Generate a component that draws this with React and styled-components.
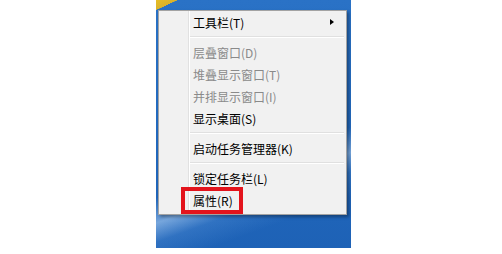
import React from 'react';
import styled, { createGlobalStyle } from 'styled-components';

const GlobalStyle = createGlobalStyle`
  html, body {
    margin: 0;
    padding: 0;
    background: #ffffff;
  }
  body {
    font-family: "Noto Sans CJK SC", "Liberation Sans", sans-serif;
  }
`;

const Page = styled.div`
  width: 502px;
  height: 254px;
  padding-left: 156px;
  box-sizing: border-box;
`;

const Desktop = styled.div`
  position: relative;
  width: 195px;
  height: 248px;
  padding: 10px 0 0 2px;
  box-sizing: border-box;
  overflow: hidden;
  background:
    linear-gradient(160deg, transparent 62%, rgba(190, 220, 250, 0.55) 70%, rgba(120, 175, 235, 0.2) 76%, transparent 84%),
    linear-gradient(180deg, #2a72c6 0%, #2168bd 60%, #1e62b6 100%);
`;

const Corner = styled.div`
  position: absolute;
  top: 0;
  left: 0;
  width: 22px;
  height: 12px;
  background: linear-gradient(155deg, #e6bd25 0%, #d9b22a 45%, transparent 46%);
`;

const Menu = styled.div`
  position: relative;
  width: 189px;
  padding: 0 0 3px;
  box-sizing: border-box;
  background: #f1f1f1;
  border: 1px solid #a3a3a3;
  box-shadow: 2px 2px 3px rgba(0, 0, 0, 0.35);

  &::before {
    content: '';
    position: absolute;
    top: 0;
    bottom: 0;
    left: 29px;
    width: 1px;
    background: #e1e1e1;
    border-right: 1px solid #ffffff;
  }
`;

const Item = styled.div`
  position: relative;
  display: flex;
  align-items: center;
  height: 22px;
  padding-left: 34px;
  padding-right: 12px;
  font-size: 12px;
  color: ${p => (p.$disabled ? '#8a8a8a' : '#000000')};
  white-space: nowrap;
`;

const Label = styled.span`
  flex: 1;
`;

const Arrow = styled.span`
  width: 0;
  height: 0;
  border-top: 3.5px solid transparent;
  border-bottom: 3.5px solid transparent;
  border-left: 4px solid #000000;
`;

const Separator = styled.div`
  height: 8px;
  display: flex;
  align-items: center;
  padding-left: 31px;
  padding-right: 2px;

  &::after {
    content: '';
    flex: 1;
    height: 1px;
    background: #e0e0e0;
    border-bottom: 1px solid #ffffff;
  }
`;

const Highlight = styled.span`
  position: absolute;
  left: 22px;
  top: -2px;
  width: 62px;
  height: 27px;
  box-sizing: border-box;
  border: 4px solid #e3141c;
`;

export default function App() {
  return (
    <>
      <GlobalStyle />
      <Page>
        <Desktop>
          <Corner />
          <Menu>
            <Item>
              <Label>工具栏(T)</Label>
              <Arrow />
            </Item>
            <Separator />
            <Item $disabled><Label>层叠窗口(D)</Label></Item>
            <Item $disabled><Label>堆叠显示窗口(T)</Label></Item>
            <Item $disabled><Label>并排显示窗口(I)</Label></Item>
            <Item><Label>显示桌面(S)</Label></Item>
            <Separator />
            <Item><Label>启动任务管理器(K)</Label></Item>
            <Separator />
            <Item><Label>锁定任务栏(L)</Label></Item>
            <Item>
              <Label>属性(R)</Label>
              <Highlight />
            </Item>
          </Menu>
        </Desktop>
      </Page>
    </>
  );
}
